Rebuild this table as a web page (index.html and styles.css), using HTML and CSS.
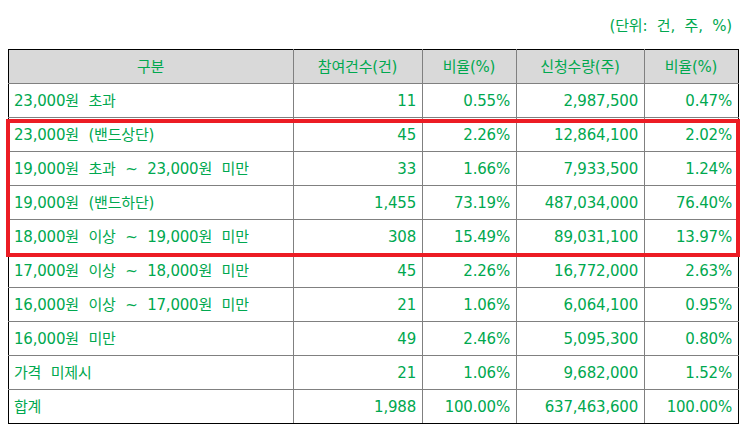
FILE: index.html
```html
<!DOCTYPE html>
<html lang="ko">
<head>
<meta charset="utf-8">
<link rel="stylesheet" href="styles.css">
</head>
<body>
<div class="page">
  <div class="unit">(단위: 건, 주, %)</div>
  <div class="table-wrap">
    <table class="grid">
      <colgroup>
        <col class="c1"><col class="c2"><col class="c3"><col class="c4"><col class="c5">
      </colgroup>
      <thead>
        <tr><th>구분</th><th>참여건수(건)</th><th>비율(%)</th><th>신청수량(주)</th><th>비율(%)</th></tr>
      </thead>
      <tbody>
        <tr><td>23,000원 초과</td><td>11</td><td>0.55%</td><td>2,987,500</td><td>0.47%</td></tr>
        <tr><td>23,000원 (밴드상단)</td><td>45</td><td>2.26%</td><td>12,864,100</td><td>2.02%</td></tr>
        <tr><td>19,000원 초과 ~ 23,000원 미만</td><td>33</td><td>1.66%</td><td>7,933,500</td><td>1.24%</td></tr>
        <tr><td>19,000원 (밴드하단)</td><td>1,455</td><td>73.19%</td><td>487,034,000</td><td>76.40%</td></tr>
        <tr><td>18,000원 이상 ~ 19,000원 미만</td><td>308</td><td>15.49%</td><td>89,031,100</td><td>13.97%</td></tr>
        <tr><td>17,000원 이상 ~ 18,000원 미만</td><td>45</td><td>2.26%</td><td>16,772,000</td><td>2.63%</td></tr>
        <tr><td>16,000원 이상 ~ 17,000원 미만</td><td>21</td><td>1.06%</td><td>6,064,100</td><td>0.95%</td></tr>
        <tr><td>16,000원 미만</td><td>49</td><td>2.46%</td><td>5,095,300</td><td>0.80%</td></tr>
        <tr><td>가격 미제시</td><td>21</td><td>1.06%</td><td>9,682,000</td><td>1.52%</td></tr>
        <tr><td>합계</td><td>1,988</td><td>100.00%</td><td>637,463,600</td><td>100.00%</td></tr>
      </tbody>
    </table>
    <div class="highlight"></div>
  </div>
</div>
</body>
</html>
```

FILE: styles.css
```css
html, body {
  margin: 0;
  padding: 0;
  background: #ffffff;
}

.page {
  width: 730px;
  padding-left: 8px;
  font-family: "DejaVu Sans", "Noto Sans CJK KR", sans-serif;
  font-size: 15px;
  color: #00a84f;
}

.unit {
  height: 49px;
  display: flex;
  align-items: center;
  justify-content: flex-end;
  padding-right: 6px;
  letter-spacing: -0.2px;
  word-spacing: 5px;
}

.table-wrap {
  position: relative;
}

.grid {
  width: 730px;
  border-collapse: collapse;
  table-layout: fixed;
}

.c1 { width: 285px; }
.c2 { width: 129px; }
.c3 { width: 94px; }
.c4 { width: 128px; }
.c5 { width: 94px; }

.grid th,
.grid td {
  height: 34px;
  padding: 0 6px 0 5px;
  border: 1px solid #808080;
  line-height: 20px;
  white-space: nowrap;
  letter-spacing: -0.2px;
  word-spacing: 5px;
  box-sizing: border-box;
}

.grid th {
  background: #d9d9d9;
  font-weight: normal;
  text-align: center;
}

.grid td {
  text-align: right;
}

.grid td:first-child {
  text-align: left;
}

.grid tr > :first-child { border-left-color: #000000; }
.grid tr > :last-child { border-right-color: #000000; }
.grid thead th { border-top-color: #000000; }
.grid tbody tr:last-child td { border-bottom-color: #000000; }

.highlight {
  position: absolute;
  left: -2px;
  top: 70px;
  width: 734px;
  height: 138px;
  border: 4px solid #ec1c24;
  box-sizing: border-box;
  pointer-events: none;
}
```
